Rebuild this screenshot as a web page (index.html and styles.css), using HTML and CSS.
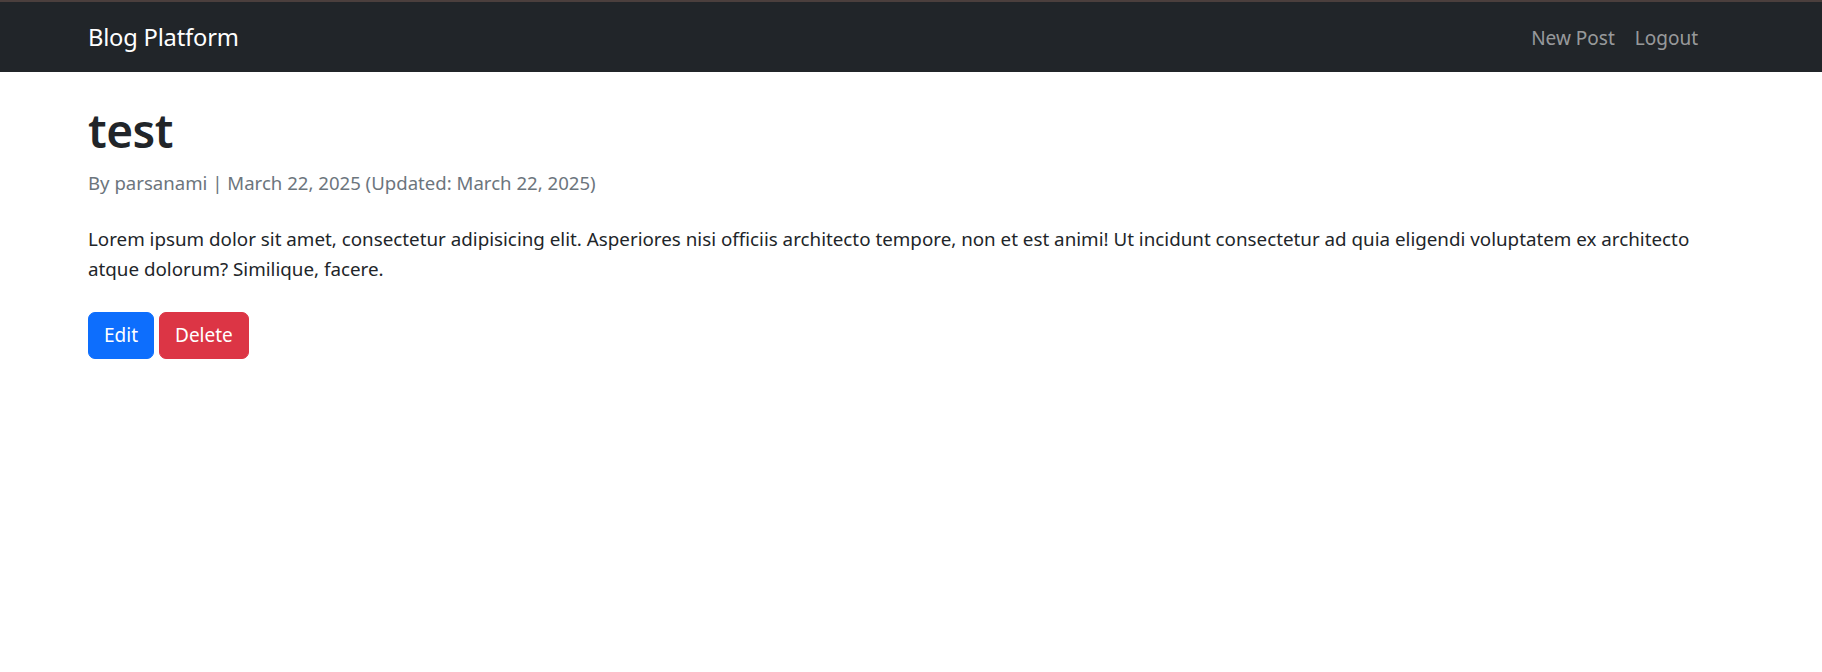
FILE: index.html
```html
<!DOCTYPE html>
<html lang="en">
<head>
<meta charset="utf-8">
<title>test - Blog Platform</title>
<link rel="stylesheet" href="styles.css">
</head>
<body>
<div class="topstrip"></div>
<nav class="navbar">
  <div class="nav-inner">
    <a class="brand" href="#">Blog Platform</a>
    <div class="nav-links">
      <a class="nav-link" href="#">New Post</a>
      <a class="nav-link" href="#">Logout</a>
    </div>
  </div>
</nav>
<main class="container">
  <h1 class="title">test</h1>
  <p class="meta">By parsanami | March 22, 2025 (Updated: March 22, 2025)</p>
  <p class="content">Lorem ipsum dolor sit amet, consectetur adipisicing elit. Asperiores nisi officiis architecto tempore, non et est animi! Ut incidunt consectetur ad quia eligendi voluptatem ex architecto atque dolorum? Similique, facere.</p>
  <div class="actions">
    <a class="btn btn-primary" href="#">Edit</a>
    <a class="btn btn-danger" href="#">Delete</a>
  </div>
</main>
</body>
</html>
```
FILE: styles.css
```css
* { box-sizing: border-box; }
html, body { margin: 0; padding: 0; background: #fff; }
body {
  font-family: "Noto Sans", "Open Sans", sans-serif;
  font-size: 20px;
  line-height: 1.5;
  color: #212529;
}
a { text-decoration: none; }
.topstrip { height: 2px; background: #4b3f3d; }
.navbar { background: #212529; height: 70px; }
.nav-inner {
  height: 100%;
  padding: 2px 114px 0 88px;
  display: flex;
  align-items: center;
  justify-content: space-between;
}
.brand { color: #fff; font-size: 23.7px; letter-spacing: -0.2px; }
.nav-links { display: flex; }
.nav-link {
  color: rgba(255,255,255,0.55);
  font-size: 19px;
  padding: 8px 10px;
}
.container { padding: 0 88px; }
.title {
  font-size: 46px;
  font-weight: 600;
  line-height: 1.2;
  margin: 31px 0 10px;
  letter-spacing: -0.5px;
}
.meta { color: #6c757d; margin: 0 0 26px; font-size: 18.6px; line-height: 30px; }
.content { margin: 0 0 28px; font-size: 18.8px; line-height: 30px; }
.actions { display: flex; gap: 5px; }
.btn {
  display: inline-block;
  color: #fff;
  font-size: 19px;
  line-height: 1.5;
  padding: 8px 15px;
  border-radius: 7px;
  border: 1px solid transparent;
}
.btn-primary { background: #0d6efd; border-color: #0d6efd; }
.btn-danger { background: #dc3545; border-color: #dc3545; }
```
